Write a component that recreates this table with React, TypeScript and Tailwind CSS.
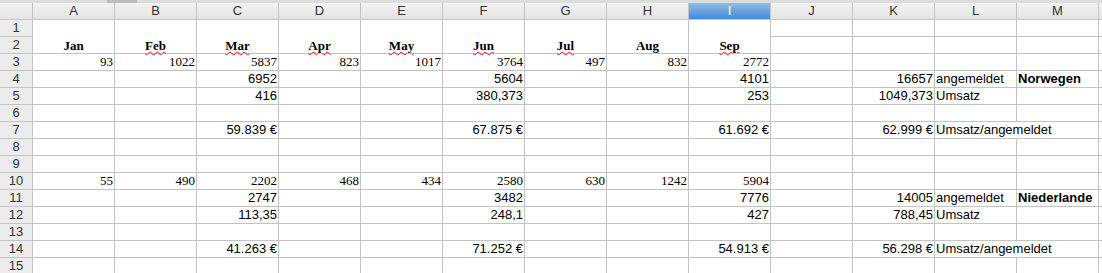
import React from "react";

const COLS = ["A", "B", "C", "D", "E", "F", "G", "H", "I", "J", "K", "L", "M"];

type Cell = { v: string; align?: "r" | "l"; serif?: boolean; bold?: boolean; span2?: boolean };
type Row = Record<string, Cell>;

const r = (v: string): Cell => ({ v, align: "r" });
const s = (v: string): Cell => ({ v, align: "r", serif: true });
const l = (v: string): Cell => ({ v, align: "l" });
const b = (v: string): Cell => ({ v, align: "l", bold: true });
const ls = (v: string): Cell => ({ v, align: "l", span2: true });

const rows: Record<number, Row> = {
  3: { A: s("93"), B: s("1022"), C: s("5837"), D: s("823"), E: s("1017"), F: s("3764"), G: s("497"), H: s("832"), I: s("2772") },
  4: { C: r("6952"), F: r("5604"), I: r("4101"), K: r("16657"), L: l("angemeldet"), M: b("Norwegen") },
  5: { C: r("416"), F: r("380,373"), I: r("253"), K: r("1049,373"), L: l("Umsatz") },
  7: { C: r("59.839 €"), F: r("67.875 €"), I: r("61.692 €"), K: r("62.999 €"), L: ls("Umsatz/angemeldet") },
  10: { A: s("55"), B: s("490"), C: s("2202"), D: s("468"), E: s("434"), F: s("2580"), G: s("630"), H: s("1242"), I: s("5904") },
  11: { C: r("2747"), F: r("3482"), I: r("7776"), K: r("14005"), L: l("angemeldet"), M: b("Niederlande") },
  12: { C: r("113,35"), F: r("248,1"), I: r("427"), K: r("788,45"), L: l("Umsatz") },
  14: { C: r("41.263 €"), F: r("71.252 €"), I: r("54.913 €"), K: r("56.298 €"), L: ls("Umsatz/angemeldet") },
};

const months: [string, string, boolean][] = [
  ["A", "Jan", false],
  ["B", "Feb", true],
  ["C", "Mar", true],
  ["D", "Apr", true],
  ["E", "May", true],
  ["F", "Jun", true],
  ["G", "Jul", true],
  ["H", "Aug", false],
  ["I", "Sep", true],
];

const sans = "font-['Liberation_Sans',Arial,sans-serif]";
const serif = "font-['Liberation_Serif','Times_New_Roman',serif]";

function RowHead({ n }: { n: number }) {
  return (
    <div className={`bg-[#ececec] text-[#333] text-[13px] leading-[16px] text-center ${sans}`}>{n}</div>
  );
}

export default function App() {
  const items: React.ReactNode[] = [];

  // header row
  items.push(<div key="corner" className="bg-linear-to-b from-[#f2f2f2] to-[#e4e4e4]" />);
  COLS.forEach((c) => {
    const sel = c === "I";
    items.push(
      <div
        key={"h" + c}
        className={
          sel
            ? `bg-linear-to-b from-[#92bdea] via-[#6aa2df] to-[#478ad6] text-white text-[13px] leading-[16px] text-center ${sans}`
            : `bg-linear-to-b from-[#f2f2f2] to-[#e4e4e4] text-[#333] text-[13px] leading-[16px] text-center ${sans}`
        }
      >
        {c}
      </div>
    );
  });
  items.push(<div key="hN" className="bg-linear-to-b from-[#f2f2f2] to-[#e4e4e4]" />);

  // row 1 (with merged month cells)
  items.push(<RowHead key="rh1" n={1} />);
  months.forEach(([c, m, sq]) => {
    items.push(
      <div key={"m" + c} className="row-span-2 bg-white flex items-end justify-center relative z-10">
        <span
          className={`${serif} font-bold text-[13px] leading-[14px] text-black ${
            sq ? "underline decoration-wavy decoration-[#e01b1b] decoration-1 underline-offset-[1px]" : ""
          }`}
        >
          {m}
        </span>
      </div>
    );
  });
  ["J", "K", "L", "M"].forEach((c) => items.push(<div key={"r1" + c} className="bg-white" />));
  items.push(<div key="r1N" className="bg-white" />);

  // row 2
  items.push(<RowHead key="rh2" n={2} />);
  ["J", "K", "L", "M"].forEach((c) => items.push(<div key={"r2" + c} className="bg-white" />));
  items.push(<div key="r2N" className="bg-white" />);

  for (let n = 3; n <= 15; n++) {
    items.push(<RowHead key={"rh" + n} n={n} />);
    const row = rows[n] || {};
    let skip = false;
    COLS.forEach((c) => {
      if (skip) {
        skip = false;
        return;
      }
      const cell = row[c];
      if (!cell) {
        items.push(<div key={n + c} className="bg-white" />);
        return;
      }
      if (cell.span2) skip = true;
      items.push(
        <div
          key={n + c}
          className={`bg-white whitespace-nowrap overflow-hidden text-[13px] leading-[16px] text-black ${
            cell.serif ? serif : sans
          } ${cell.bold ? "font-bold" : ""} ${cell.align === "r" ? "text-right pr-px" : "text-left pl-px"} ${
            cell.span2 ? "col-span-2" : ""
          } ${cell.bold ? "pl-[2px]" : ""}`}
        >
          {cell.v}
        </div>
      );
    });
    items.push(<div key={n + "N"} className="bg-white" />);
  }

  return (
    <div className="w-[1102px] h-[273px] overflow-hidden bg-white">
      <div className="h-[3px] bg-[#dcdcdc] flex">
        <div className="w-[107px]" />
        <div className="w-[30px] bg-[#bdbdbd]" />
      </div>
      <div className="grid grid-cols-[32px_repeat(13,81px)_1fr] auto-rows-[16px] gap-px bg-[#c3c3c3]">
        {items}
      </div>
    </div>
  );
}
